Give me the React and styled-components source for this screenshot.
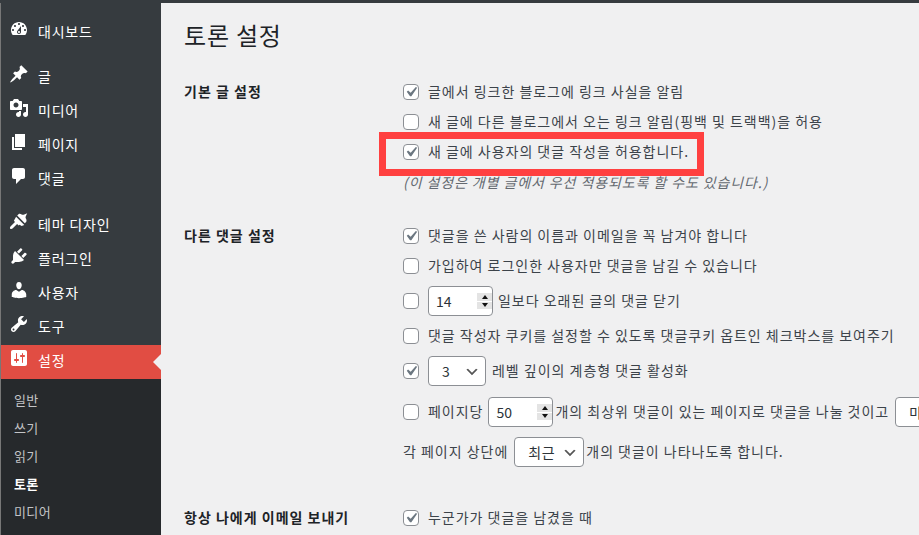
import React from "react";
import styled, { createGlobalStyle } from "styled-components";

const FONT = `"Noto Sans CJK KR", "Noto Sans", sans-serif`;
const CHEVRON = `url("data:image/svg+xml;charset=US-ASCII,%3Csvg%20width%3D%2220%22%20height%3D%2220%22%20xmlns%3D%22http%3A%2F%2Fwww.w3.org%2F2000%2Fsvg%22%3E%3Cpath%20d%3D%22M5%206l5%205%205-5%202%201-7%207-7-7%202-1z%22%20fill%3D%22%23555%22%2F%3E%3C%2Fsvg%3E")`;
const CHECK = `url("data:image/svg+xml;charset=US-ASCII,%3Csvg%20xmlns%3D%22http%3A%2F%2Fwww.w3.org%2F2000%2Fsvg%22%20viewBox%3D%220%200%2020%2020%22%3E%3Cpath%20d%3D%22M14.83%204.89l1.34.94-5.81%208.38H9.02L5.78%209.67l1.34-1.25%202.57%202.4z%22%20fill%3D%22%236c7781%22%2F%3E%3C%2Fsvg%3E")`;

const GlobalStyle = createGlobalStyle`
  html, body {
    margin: 0;
    height: 100%;
    overflow: hidden;
    background: #f0f0f1;
  }
`;

const Page = styled.div`
  display: flex;
  width: 919px;
  height: 535px;
  overflow: hidden;
  font-family: ${FONT};
  font-size: 13px;
  color: #3c434a;
  background: #f0f0f1;
  border-top: 3px solid #363b3f;
  box-sizing: border-box;
`;

const Sidebar = styled.nav`
  flex: none;
  width: 160px;
  margin-left: 1px;
  margin-top: -3px;
  padding-top: 16px;
  background: #363b3f;
  box-shadow: -1px 0 0 #777;
`;

const MenuItem = styled.div`
  display: flex;
  align-items: center;
  position: relative;
  box-sizing: border-box;
  height: 34px;
  margin-top: ${(p) => p.$gap || 0}px;
  padding: 0 0 4px 8px;
  color: #fff;
  font-size: 14px;
  letter-spacing: 0.8px;
  background: ${(p) => (p.$active ? "#e14d43" : "transparent")};
  svg {
    flex: none;
    width: 20px;
    height: 20px;
    margin-top: -4px;
    margin-right: 9px;
    fill: #fff;
  }
  ${(p) =>
    p.$active &&
    `&::after {
      content: "";
      position: absolute;
      right: 0;
      top: 50%;
      margin-top: -8px;
      border: 8px solid transparent;
      border-right-color: #f0f0f1;
    }`}
`;

const SubMenu = styled.div`
  display: flex;
  flex-direction: column;
  padding: 7px 0 0 13px;
  height: 160px;
  background: #26292c;
`;

const SubItem = styled.div`
  height: 28px;
  line-height: 28px;
  font-size: 13px;
  letter-spacing: 0.4px;
  font-weight: ${(p) => (p.$current ? 700 : 400)};
  color: ${(p) => (p.$current ? "#fff" : "#c3c4c7")};
`;

const Main = styled.main`
  flex: 1;
  min-width: 0;
  padding: 15px 0 0 23px;
  position: relative;
`;

const Title = styled.h1`
  margin: 0 0 23px;
  height: 36px;
  line-height: 34px;
  font-size: 24px;
  letter-spacing: 0.8px;
  font-weight: 400;
  color: #1d2327;
`;

const Section = styled.section`
  display: flex;
  margin-bottom: ${(p) => p.$bottom || 0}px;
`;

const SectionLabel = styled.div`
  flex: none;
  width: 219px;
  height: 28px;
  line-height: 28px;
  font-size: 14px;
  letter-spacing: 1px;
  font-weight: 700;
  color: #1d2327;
  white-space: nowrap;
`;

const Fields = styled.div`
  display: flex;
  flex-direction: column;
  white-space: nowrap;
`;

const Row = styled.div`
  display: flex;
  align-items: center;
  height: ${(p) => p.$h || 30}px;
`;

const Text = styled.span`
  font-size: 14px;
  letter-spacing: 0.98px;
  margin-left: ${(p) => p.$left || 0}px;
  margin-bottom: 2px;
`;

const Note = styled.div`
  height: 30px;
  line-height: 30px;
  font-size: 14px;
  letter-spacing: 0.9px;
  font-style: italic;
  color: #646970;
`;

const Check = styled.input.attrs({ type: "checkbox" })`
  appearance: none;
  flex: none;
  box-sizing: border-box;
  width: 16px;
  height: 16px;
  margin: 0 9px 0 0;
  background: #fff;
  border: 1px solid #8c8f94;
  border-radius: 4px;
  &:checked {
    background: #fff ${CHECK} center / 20px 20px no-repeat;
  }
`;

const NumberField = styled.span`
  position: relative;
  flex: none;
  display: block;
  width: 65px;
  height: 30px;
  margin-left: ${(p) => p.$left || 0}px;
`;

const NumberBox = styled.input.attrs({ type: "number" })`
  box-sizing: border-box;
  display: block;
  width: 100%;
  height: 100%;
  margin: 0;
  padding: 0 0 0 7px;
  font: 14px ${FONT};
  color: #2c3338;
  background: #fff;
  border: 1px solid #8c8f94;
  border-radius: 4px;
  appearance: textfield;
  &::-webkit-inner-spin-button {
    appearance: none;
  }
`;

const Spinner = styled.span`
  position: absolute;
  top: 7px;
  right: 1px;
  display: flex;
  flex-direction: column;
  gap: 1px;
  width: 15px;
  height: 16px;
`;

const SpinArrow = styled.span`
  flex: 1;
  display: flex;
  align-items: center;
  justify-content: center;
  background: #e4e4e4;
  &::before {
    content: "";
    border: 3.5px solid transparent;
    ${(p) =>
      p.$down
        ? "border-top: 4px solid #111; border-bottom: 0;"
        : "border-bottom: 4px solid #111; border-top: 0;"}
  }
`;

const Select = styled.select`
  box-sizing: border-box;
  appearance: none;
  flex: none;
  width: ${(p) => p.$w}px;
  height: 30px;
  margin: 0 0 0 ${(p) => p.$left || 0}px;
  padding: 0 24px 0 13px;
  font: 14px ${FONT};
  letter-spacing: 0.5px;
  color: #2c3338;
  background: #fff ${CHEVRON} no-repeat right 5px top 55%;
  background-size: 16px 16px;
  border: 1px solid #8c8f94;
  border-radius: 4px;
`;

const Highlight = styled.div`
  position: absolute;
  left: 218px;
  top: 129px;
  width: 325px;
  height: 44px;
  box-sizing: border-box;
  border: 7px solid #ff4040;
`;

const ICONS = {
  dashboard:
    "M3.76 16h12.48c1.1-1.37 1.76-3.11 1.76-5 0-4.42-3.58-8-8-8s-8 3.58-8 8c0 1.89.66 3.63 1.76 5zM10 4c.55 0 1 .45 1 1s-.45 1-1 1-1-.45-1-1 .45-1 1-1zM6 6c.55 0 1 .45 1 1s-.45 1-1 1-1-.45-1-1 .45-1 1-1zm8 0c.55 0 1 .45 1 1s-.45 1-1 1-1-.45-1-1 .45-1 1-1zm-5.37 5.55L12 7v6c0 1.1-.9 2-2 2s-2-.9-2-2c0-.57.24-1.08.63-1.45zM4 10c.55 0 1 .45 1 1s-.45 1-1 1-1-.45-1-1 .45-1 1-1zm12 0c.55 0 1 .45 1 1s-.45 1-1 1-1-.45-1-1 .45-1 1-1zm-5 3c0-.55-.45-1-1-1s-1 .45-1 1 .45 1 1 1 1-.45 1-1z",
  post: "M10.44 3.02l1.82-1.82 6.36 6.35-1.83 1.82c-1.05-.68-2.48-.57-3.41.36l-.75.75c-.92.93-1.04 2.35-.35 3.41l-1.83 1.82-2.41-2.41-2.8 2.79c-.42.42-3.38 2.71-3.8 2.29s1.86-3.39 2.28-3.81l2.79-2.79L4.1 9.36l1.83-1.82c1.05.69 2.48.57 3.4-.36l.75-.75c.93-.92 1.05-2.35.36-3.41z",
  media:
    "M13 11V4c0-.55-.45-1-1-1h-1.67L9 1H5L3.67 3H2c-.55 0-1 .45-1 1v7c0 .55.45 1 1 1h10c.55 0 1-.45 1-1zM7 4.5c1.38 0 2.5 1.12 2.5 2.5S8.38 9.5 7 9.5 4.5 8.38 4.5 7 5.62 4.5 7 4.5zM14 6h5v10.5c0 1.38-1.12 2.5-2.5 2.5S14 17.88 14 16.5s1.12-2.5 2.5-2.5c.17 0 .34.02.5.05V9h-3V6zm-4 8.05V13h2v3.5c0 1.38-1.12 2.5-2.5 2.5S7 17.88 7 16.5 8.12 14 9.5 14c.17 0 .34.02.5.05z",
  page: "M6 15V2h10v13H6zm-1 1h8v2H3V5h2v11z",
  comments:
    "M5 2h9c1.1 0 2 .9 2 2v7c0 1.1-.9 2-2 2h-2l-5 5v-5H5c-1.1 0-2-.9-2-2V4c0-1.1.9-2 2-2z",
  appearance:
    "M8.2 3.6l1.3-1.3c.7-.7 2.1-.5 3.100.1 1 .6 1.700.6 2.700.1l2.900-1.300-1.300 2.900c-.5 1-.5 1.700.1 2.700.6 1 .8 2.400.1 3.100l-1.300 1.300zM7.100 4.700l8.200 8.200-2.700 1-2-1.200-.9.9-1.600-1.600-4.300 4.300c-.8.8-1.900 1-2.500.4s-.4-1.700.4-2.500l4.300-4.300-1.100-1.100z",
  plugins:
    "M13.11 4.36L9.87 7.6 8 5.73l3.24-3.24c.35-.34 1.05-.2 1.56.32.52.51.66 1.21.31 1.55zm-8 1.77l.91-1.12 9.01 9.01-1.19.84c-.71.71-2.63 1.16-3.82 1.16H6.14L4.9 17.26c-.59.59-1.54.59-2.12 0-.59-.58-.59-1.53 0-2.12l1.24-1.24v-3.88c0-1.13.4-3.19 1.09-3.89zm7.26 3.97l3.24-3.24c.34-.35 1.04-.21 1.55.31.52.51.66 1.21.31 1.55l-3.24 3.25z",
  users:
    "M10 9.25c-2.27 0-2.73-3.44-2.73-3.44C7 4.02 7.82 2 9.97 2c2.16 0 2.98 2.02 2.71 3.81 0 0-.41 3.44-2.68 3.44zm0 2.57L12.72 10c2.39 0 4.52 2.33 4.52 4.53v2.49s-3.65 1.13-7.24 1.13c-3.65 0-7.24-1.13-7.24-1.13v-2.49c0-2.25 1.94-4.48 4.47-4.48z",
  tools:
    "M16.68 9.77c-1.34 1.34-3.3 1.67-4.95.99l-5.41 6.52c-.99.99-2.59.99-3.58 0s-.99-2.59 0-3.57l6.52-5.42c-.68-1.65-.35-3.61.99-4.95 1.28-1.28 3.12-1.62 4.72-1.06l-2.89 2.89 2.82 2.82 2.86-2.87c.53 1.58.18 3.41-1.08 4.67zM3.81 16.26c.39.39 1.03.39 1.42 0 .38-.39.38-1.03 0-1.42-.39-.39-1.03-.39-1.42 0-.38.39-.38 1.03 0 1.42z",
  settings:
    "M18 16V4c0-1.1-.9-2-2-2H4c-1.1 0-2 .9-2 2v12c0 1.1.9 2 2 2h12c1.1 0 2-.9 2-2zM8 11h1c.55 0 1 .45 1 1s-.45 1-1 1H8v1.5c0 .28-.22.5-.5.5s-.5-.22-.5-.5V13H6c-.55 0-1-.45-1-1s.45-1 1-1h1V5.5c0-.28.22-.5.5-.5s.5.22.5.5V11zm5-2h-1c-.55 0-1-.45-1-1s.45-1 1-1h1V5.5c0-.28.22-.5.5-.5s.5.22.5.5V7h1c.55 0 1 .45 1 1s-.45 1-1 1h-1v5.5c0 .28-.22.5-.5.5s-.5-.22-.5-.5V9z",
};

const menu = [
  { icon: "dashboard", label: "대시보드" },
  { icon: "post", label: "글", gap: 11 },
  { icon: "media", label: "미디어" },
  { icon: "page", label: "페이지" },
  { icon: "comments", label: "댓글" },
  { icon: "appearance", label: "테마 디자인", gap: 12 },
  { icon: "plugins", label: "플러그인" },
  { icon: "users", label: "사용자" },
  { icon: "tools", label: "도구" },
  { icon: "settings", label: "설정", active: true },
];

const submenu = ["일반", "쓰기", "읽기", "토론", "미디어"];

const NumberInput = ({ value, left }) => (
  <NumberField $left={left}>
    <NumberBox defaultValue={value} />
    <Spinner>
      <SpinArrow />
      <SpinArrow $down />
    </Spinner>
  </NumberField>
);

const App = () => {
  return (
    <Page>
      <GlobalStyle />
      <Sidebar>
        {menu.map((item) => (
          <MenuItem key={item.label} $gap={item.gap} $active={item.active}>
            <svg viewBox="0 0 20 20">
              <path d={ICONS[item.icon]} />
            </svg>
            {item.label}
          </MenuItem>
        ))}
        <SubMenu>
          {submenu.map((name) => (
            <SubItem key={name} $current={name === "토론"}>
              {name}
            </SubItem>
          ))}
        </SubMenu>
      </Sidebar>
      <Main>
        <Title>토론 설정</Title>
        <Section $bottom={24}>
          <SectionLabel>기본 글 설정</SectionLabel>
          <Fields>
            <Row>
              <Check defaultChecked />
              <Text>글에서 링크한 블로그에 링크 사실을 알림</Text>
            </Row>
            <Row>
              <Check />
              <Text>새 글에 다른 블로그에서 오는 링크 알림(핑백 및 트랙백)을 허용</Text>
            </Row>
            <Row>
              <Check defaultChecked />
              <Text>새 글에 사용자의 댓글 작성을 허용합니다.</Text>
            </Row>
            <Note>(이 설정은 개별 글에서 우선 적용되도록 할 수도 있습니다.)</Note>
          </Fields>
        </Section>
        <Section $bottom={32}>
          <SectionLabel>다른 댓글 설정</SectionLabel>
          <Fields>
            <Row>
              <Check defaultChecked />
              <Text>댓글을 쓴 사람의 이름과 이메일을 꼭 남겨야 합니다</Text>
            </Row>
            <Row>
              <Check />
              <Text>가입하여 로그인한 사용자만 댓글을 남길 수 있습니다</Text>
            </Row>
            <Row $h={40}>
              <Check />
              <NumberInput value={14} />
              <Text $left={5}>일보다 오래된 글의 댓글 닫기</Text>
            </Row>
            <Row>
              <Check />
              <Text>댓글 작성자 쿠키를 설정할 수 있도록 댓글쿠키 옵트인 체크박스를 보여주기</Text>
            </Row>
            <Row $h={40}>
              <Check defaultChecked />
              <Select $w={58} defaultValue="3">
                <option>3</option>
              </Select>
              <Text $left={6}>레벨 깊이의 계층형 댓글 활성화</Text>
            </Row>
            <Row $h={42}>
              <Check />
              <Text>페이지당</Text>
              <NumberInput value={50} left={5} />
              <Text $left={2}>개의 최상위 댓글이 있는 페이지로 댓글을 나눌 것이고</Text>
              <Select $w={90} $left={6} defaultValue="마지막">
                <option>마지막</option>
              </Select>
            </Row>
            <Row $h={38}>
              <Text>각 페이지 상단에</Text>
              <Select $w={70} $left={6} defaultValue="최근">
                <option>최근</option>
              </Select>
              <Text $left={2}>개의 댓글이 나타나도록 합니다.</Text>
            </Row>
          </Fields>
        </Section>
        <Section>
          <SectionLabel>항상 나에게 이메일 보내기</SectionLabel>
          <Fields>
            <Row>
              <Check defaultChecked />
              <Text>누군가가 댓글을 남겼을 때</Text>
            </Row>
          </Fields>
        </Section>
        <Highlight />
      </Main>
    </Page>
  );
};

export default App;
